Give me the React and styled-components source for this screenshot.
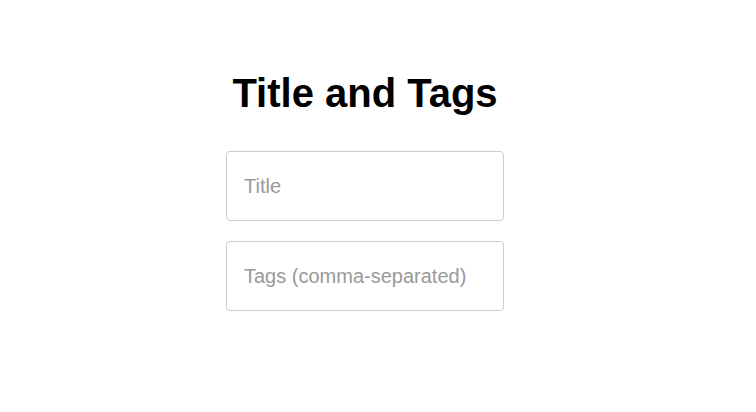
import styled, { createGlobalStyle } from "styled-components";

const GlobalStyle = createGlobalStyle`
    html, body {
        margin: 0;
        padding: 0;
        background: #fff;
    }
    body {
        font-family: "Liberation Sans", Arial, sans-serif;
    }
`;

export default function App() {
    return (
        <>
            <GlobalStyle />
            <Page>
                <Heading>Title and Tags</Heading>
                <Form>
                    <Field type="text" placeholder="Title" />
                    <Field type="text" placeholder="Tags (comma-separated)" />
                </Form>
            </Page>
        </>
    );
}

const Page = styled.main`
    width: 730px;
    padding-top: 70px;
    display: flex;
    flex-direction: column;
    align-items: center;
`;

const Heading = styled.h1`
    margin: 0 0 35px;
    font-size: 40px;
    font-weight: 700;
    line-height: 46px;
    color: #000;
`;

const Form = styled.form`
    display: flex;
    flex-direction: column;
    gap: 20px;
`;

const Field = styled.input`
    box-sizing: border-box;
    width: 278px;
    height: 70px;
    padding: 0 17px;
    border: 1px solid #ccc;
    border-radius: 4px;
    font-family: "Liberation Sans", Arial, sans-serif;
    font-size: 20px;
    color: #333;
    outline: none;

    &::placeholder {
        color: #999;
    }
`;
